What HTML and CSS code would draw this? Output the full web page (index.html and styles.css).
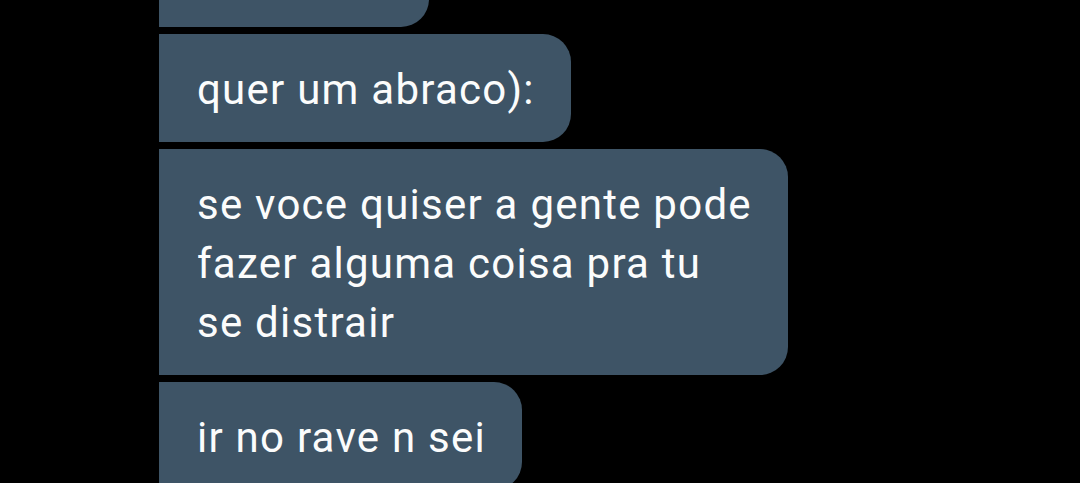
FILE: index.html
```html
<!DOCTYPE html>
<html lang="pt">
<head>
<meta charset="utf-8">
<link rel="stylesheet" href="styles.css">
</head>
<body>
<div class="chat">
  <div class="bubble bubble-first"></div>
  <div class="bubble">quer um abraco):</div>
  <div class="bubble">se voce quiser a gente pode<br>fazer alguma coisa pra tu<br>se distrair</div>
  <div class="bubble">ir no rave n sei</div>
</div>
</body>
</html>
```

FILE: styles.css
```css
html, body {
  margin: 0;
  padding: 0;
  background: #000;
  height: 100%;
  overflow: hidden;
}

.chat {
  display: flex;
  flex-direction: column;
  align-items: flex-start;
  gap: 7px;
  padding-left: 159px;
  margin-top: -81px;
}

.bubble {
  box-sizing: border-box;
  background: #3e5466;
  color: #fbfcfc;
  font-family: Roboto, "Noto Sans", sans-serif;
  font-size: 42px;
  letter-spacing: 1.25px;
  line-height: 59px;
  padding: 26px 36px 23px 38px;
  border-radius: 0 28px 28px 0;
  white-space: nowrap;
}

.bubble-first {
  width: 270px;
  height: 108px;
}
```
